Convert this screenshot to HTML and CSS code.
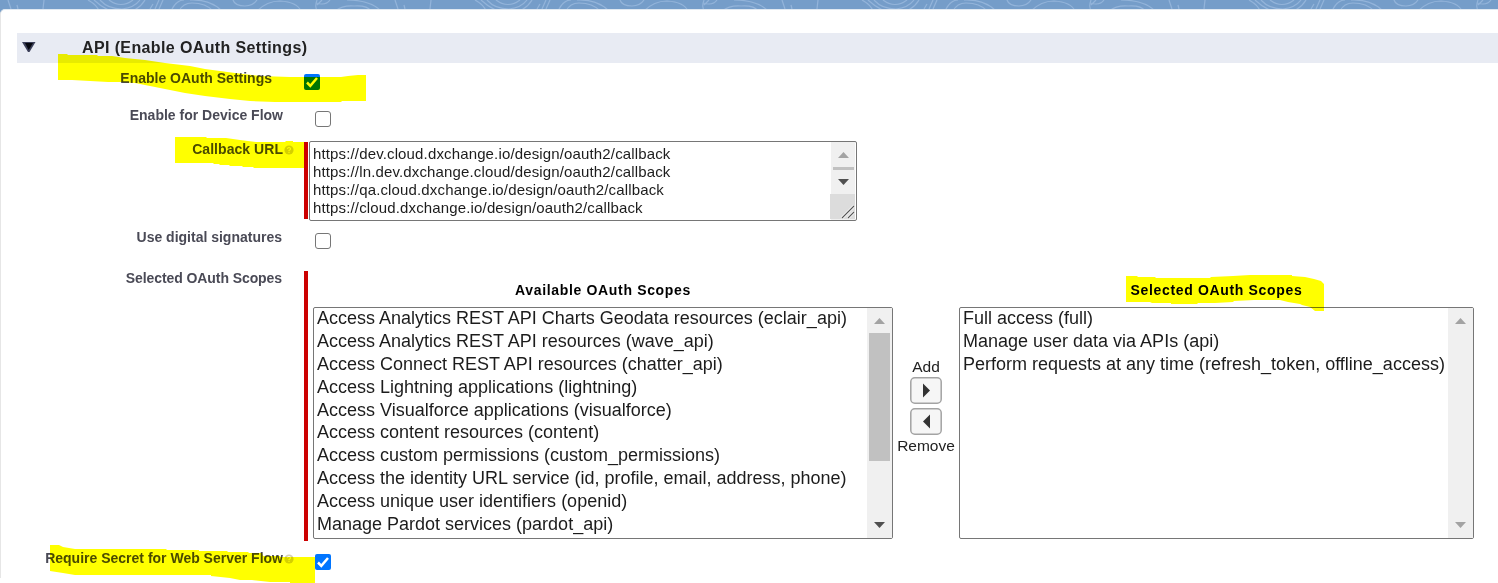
FILE: index.html
```
<!DOCTYPE html>
<html lang="en">
<head>
<meta charset="utf-8">
<title>API (Enable OAuth Settings)</title>
<link rel="stylesheet" href="styles.css">
</head>
<body>
<div class="page">
  <svg class="banner" width="1498" height="14">
    <defs>
      <pattern id="waves" width="387" height="14" patternUnits="userSpaceOnUse">
        <g fill="none" stroke="#93b4da" stroke-width="1.2">
          <path d="M8 0L11 9M17 5L18 9M44 0L43 9M88 0Q97 5 99 11M94 0Q108 13 122 13Q138 12 145 0M100 0Q108 9 122 9Q134 8 140 0M109 0Q121 9 133 0M150 9L153 4M155 9L159 0M159 9L163 0M172 9Q177 0 184 0M190 0Q210 -1 222 11M179 11Q183 3 192 3Q206 3 213 11M233 0Q235 6 245 6Q253 6 257 0M257 11Q267 1 280 1Q297 2 301 11M317 0Q314 8 318 11M316 3Q326 6 330 0M322 0L317 5M335 11Q343 5 354 6Q367 5 371 11M347 0Q370 0 381 11"/>
        </g>
      </pattern>
    </defs>
    <rect width="1498" height="14" fill="#759dc9"/>
    <rect width="1498" height="14" fill="url(#waves)"/>
  </svg>
  <main class="card">
    <header class="section-head">
      <svg class="twisty" width="16" height="14"><path d="M1 2H14.500L8.500 12H7Z" fill="#3b3f58"/><path d="M4 3H12L7.700 10Z" fill="#05060e"/></svg>
      <h3><span class="t-head">API (Enable OAuth Settings)</span></h3>
    </header>
    <div class="form">
      <div class="row r-enable">
        <label class="enable-label"><span class="t-enable">Enable OAuth Settings</span></label>
        <svg class="check" width="16" height="16"><rect width="16" height="16" rx="2" fill="#0075ff"/><path d="M3 8.500L6.300 11.800L13 4" fill="none" stroke="#fff" stroke-width="2.500"/></svg>
      </div>
      <div class="row r-device">
        <label><span class="t-device">Enable for Device Flow</span></label>
        <span class="box"></span>
      </div>
      <div class="row r-callback">
        <label><span class="t-callback">Callback URL</span><svg class="help" width="10" height="10"><circle cx="5" cy="5" r="4.600" fill="#d5d0b5"/><path d="M3.500 3.900Q3.600 2.500 5 2.500T6.500 3.900Q6.500 4.600 5 5.400V6.200M5 7V8" fill="none" stroke="#fff" stroke-width="1.100"/></svg></label>
        <div class="required"></div>
        <div class="textarea">
          <div class="urls">
            <div><span class="u1">https://dev.cloud.dxchange.io/design/oauth2/callback</span></div>
            <div><span class="u2">https://ln.dev.dxchange.cloud/design/oauth2/callback</span></div>
            <div><span class="u3">https://qa.cloud.dxchange.io/design/oauth2/callback</span></div>
            <div><span class="u4">https://cloud.dxchange.io/design/oauth2/callback</span></div>
          </div>
          <svg class="ta-scroll" width="25" height="78"><rect x="1" width="24" height="78" fill="#f0f0f0"/><path d="M8 16L13.500 10L19 16Z" fill="#a3a3a3"/><rect x="3" y="25" width="21" height="3" fill="#c1c1c1"/><path d="M8 37H19L13.500 43Z" fill="#505050"/><rect y="52" width="25" height="25" fill="#dcdcdc"/><path d="M12 76L24 64M18 76L24 70" stroke="#fff" stroke-width="2.500"/><path d="M12 76L24 64M18 76L24 70" stroke="#555" stroke-width="1.100"/></svg>
        </div>
      </div>
      <div class="row r-digital">
        <label><span class="t-digital">Use digital signatures</span></label>
        <span class="box"></span>
      </div>
      <div class="row r-scopes">
        <label><span class="t-scopes">Selected OAuth Scopes</span></label>
        <div class="required"></div>
        <div class="available">
          <div class="list-title"><span class="t-available">Available OAuth Scopes</span></div>
          <div class="listbox">
            <ul>
              <li><span class="o1">Access Analytics REST API Charts Geodata resources (eclair_api)</span></li>
              <li><span class="o2">Access Analytics REST API resources (wave_api)</span></li>
              <li><span class="o3">Access Connect REST API resources (chatter_api)</span></li>
              <li><span class="o4">Access Lightning applications (lightning)</span></li>
              <li><span class="o5">Access Visualforce applications (visualforce)</span></li>
              <li><span class="o6">Access content resources (content)</span></li>
              <li><span class="o7">Access custom permissions (custom_permissions)</span></li>
              <li><span class="o8">Access the identity URL service (id, profile, email, address, phone)</span></li>
              <li><span class="o9">Access unique user identifiers (openid)</span></li>
              <li><span class="o10">Manage Pardot services (pardot_api)</span></li>
            </ul>
            <svg width="25" height="230"><rect width="25" height="230" fill="#f0f0f0"/><path d="M7 16L12.500 10L18 16Z" fill="#a3a3a3"/><rect x="2" y="25" width="21" height="128" fill="#c1c1c1"/><path d="M7 214H18L12.500 220Z" fill="#505050"/></svg>
          </div>
        </div>
        <div class="mover">
          <div><span class="t-add">Add</span></div>
          <svg width="32" height="27"><rect x=".8" y=".8" width="30.400" height="25.400" rx="4" fill="#f6f6f6" stroke="#a3a3a3" stroke-width="1.500"/><path d="M13 6.500L20 13.500L13 20.500Z" fill="#333"/></svg>
          <svg width="32" height="27"><rect x=".8" y=".8" width="30.400" height="25.400" rx="4" fill="#f6f6f6" stroke="#a3a3a3" stroke-width="1.500"/><path d="M20 6.500L13 13.500L20 20.500Z" fill="#333"/></svg>
          <div class="remove"><span class="t-remove">Remove</span></div>
        </div>
        <div class="selected">
          <div class="list-title"><span class="t-selected">Selected OAuth Scopes</span></div>
          <div class="listbox">
            <ul>
              <li><span class="s1">Full access (full)</span></li>
              <li><span class="s2">Manage user data via APIs (api)</span></li>
              <li><span class="s3">Perform requests at any time (refresh_token, offline_access)</span></li>
            </ul>
            <svg width="25" height="230"><rect width="25" height="230" fill="#f0f0f0"/><path d="M7 16L12.500 10L18 16Z" fill="#a3a3a3"/><path d="M7 214H18L12.500 220Z" fill="#a3a3a3"/></svg>
          </div>
        </div>
      </div>
      <div class="row r-secret">
        <label><span class="t-secret">Require Secret for Web Server Flow</span><svg class="help" width="10" height="10"><circle cx="5" cy="5" r="4.600" fill="#d5d0b5"/><path d="M3.500 3.900Q3.600 2.500 5 2.500T6.500 3.900Q6.500 4.600 5 5.400V6.200M5 7V8" fill="none" stroke="#fff" stroke-width="1.100"/></svg></label>
        <svg class="check" width="16" height="16"><rect width="16" height="16" rx="2" fill="#0075ff"/><path d="M3 8.500L6.300 11.800L13 4" fill="none" stroke="#fff" stroke-width="2.500"/></svg>
      </div>
    </div>
  </main>
  <svg class="marker" width="1498" height="583" fill="#ff0">
    <path d="M58 54H67L68 55H97L98 56H112L125 58L145 60L165 63L190 66L205 69L235 73L260 76L290 77H341L348 76L358 75H366V101H342L341 102H275L250 101L230 99L205 96L185 93L165 89L150 86L135 83L120 82H108L90 81L72 80H58Z"/>
    <path d="M175 137H206L207 138H226L240 140L256 142H285L286 141H293V142H304V168H254L253 167H243L242 166H230L229 165H220L219 164H214L213 163H175Z"/>
    <path d="M1126 276H1137L1138 277H1155L1156 278H1210L1211 277L1233 276L1250 275H1292V276L1305 277L1314 279L1321 281L1324 284V311H1315L1310 307L1302 305L1300 304L1288 302L1280 300H1254L1234 301L1233 302L1215 303H1198L1197 304H1171V303H1152L1150 302H1126Z"/>
    <path d="M50 545H59L63 547L75 549H166L167 550H199V551H227L228 552H248L249 553H262L263 556H280V557H315V583H290V582H270L252 580H240L230 578L211 576V575H75L63 573L50 571Z"/>
  </svg>
</div>
</body>
</html>
```
FILE: styles.css
```
* { box-sizing: border-box; }
body { margin: 0; background: #fff; font-family: "Liberation Sans", Arial, sans-serif; overflow: hidden; }
svg { display: block; flex: none; }
span { white-space: nowrap; }
.page { position: relative; width: 1498px; height: 583px; overflow: hidden; isolation: isolate; }
.banner { margin-bottom: -5px; }
.card { position: relative; height: 569px; background: #fff; border-left: 1px solid #e6e6e6; border-top: 1px solid #dfe8f1; border-top-left-radius: 5px; padding: 23px 0 0 16px; }
.section-head { display: flex; height: 30px; background: #e8ebf3; }
.twisty { margin: 7px 0 0 4px; }
.section-head h3 { margin: 0 0 0 45px; font-size: 16px; line-height: 29px; letter-spacing: .38px; color: #222; }
.row { display: flex; align-items: flex-start; }
.row label { width: 266px; flex: none; display: flex; justify-content: flex-end; font-size: 14px; font-weight: bold; line-height: 16px; color: #4a4a56; }
.help { margin: 4px -11px 0 1px; }
.t-callback { letter-spacing: .05px; margin-right: .6px; }
.r-callback .help { margin-left: .4px; }
.t-digital { margin-right: 1px; }
.t-scopes { letter-spacing: -.08px; margin-right: 1px; }
.box { width: 16px; height: 16px; border: 1.500px solid #767676; border-radius: 3px; margin: 4px 0 0 32px; }
.r-enable { height: 37px; padding-top: 7px; }
.row .enable-label { width: 255px; }
.r-enable .check { margin: 4px 0 0 32px; }
.r-device { height: 37px; padding-top: 7px; }
.r-callback { height: 88px; padding-top: 4px; }
.required { width: 4px; flex: none; background: #c00; margin-left: 21px; }
.r-callback .required { height: 77px; margin-top: 1px; }
.textarea { width: 548px; height: 80px; border: 1px solid #767676; border-radius: 2px; margin-left: 1px; padding-right: 1px; display: flex; justify-content: space-between; }
.urls { padding: 3px; font-size: 15px; line-height: 18px; letter-spacing: .145px; color: #1c1c1c; }
.r-digital { height: 46px; padding-top: 4px; }
.r-scopes { height: 272px; }
.r-scopes label { margin-top: -1px; }
.r-scopes .required { height: 270px; }
.available { width: 580px; margin-left: 5px; }
.list-title { height: 36px; padding-top: 10px; text-align: center; font-size: 14px; line-height: 18px; font-weight: bold; letter-spacing: .66px; color: #000; }
.listbox { height: 232px; border: 1px solid #767676; border-radius: 2px; display: flex; justify-content: space-between; }
.listbox ul { list-style: none; margin: -1px 0 0; padding: 0 0 0 3px; font-size: 18px; line-height: 22.900px; color: #1c1c1c; }
.listbox li { height: 22.900px; }
.mover { width: 66px; display: flex; flex-direction: column; align-items: center; padding-top: 87px; gap: 4px; font-size: 15.500px; line-height: 17px; color: #222; }
.mover > div { height: 15px; }
.mover .remove { margin-top: -2px; }
.selected { width: 515px; }
.r-secret { padding-top: 7px; }
.r-secret .check { margin: 4px 0 0 32px; }
.marker { position: absolute; inset: 0; mix-blend-mode: multiply; pointer-events: none; }
```
